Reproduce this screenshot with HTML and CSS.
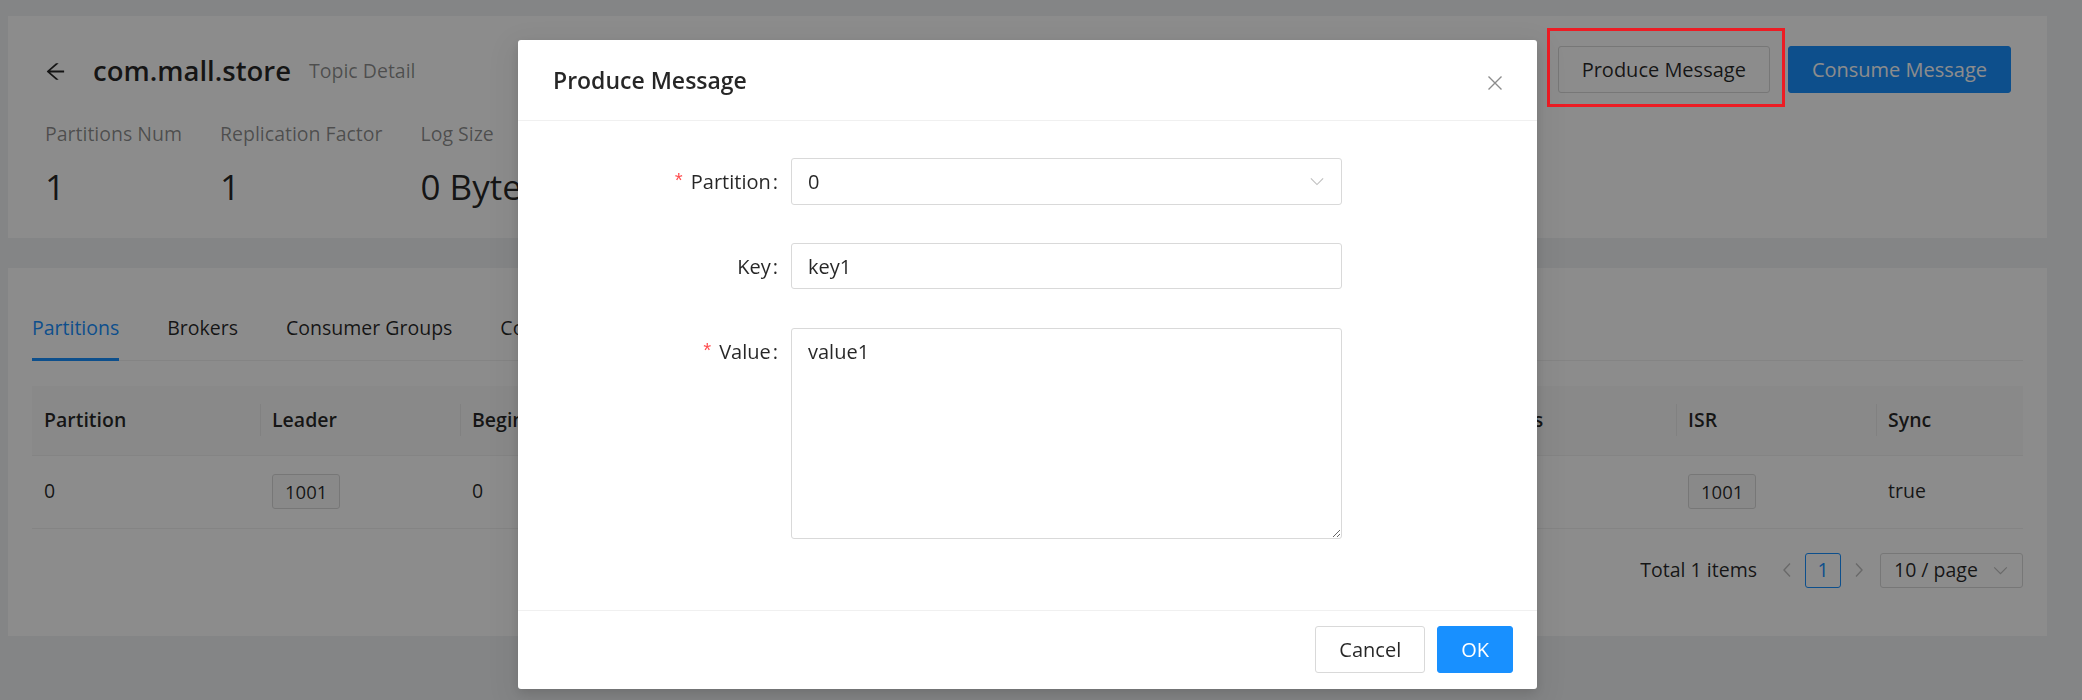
FILE: index.html
```html
<!DOCTYPE html>
<html lang="en">
<head>
<meta charset="utf-8">
<title>Topic Detail</title>
<link rel="stylesheet" href="styles.css">
</head>
<body>
<div class="page">
  <section class="card header-card">
    <div class="head-row">
      <span class="back">
        <svg viewBox="64 64 896 896" fill="currentColor"><path d="M872 474H286.9l350.2-304c5.6-4.9 2.2-14-5.2-14h-88.5c-3.9 0-7.6 1.4-10.5 3.9L155 487.8a31.96 31.960 0 000 48.3L535.1 866c1.5 1.3 3.3 2 5.2 2h91.5c7.4 0 10.8-9.2 5.2-14L286.9 550H872c4.4 0 8-3.6 8-8v-60c0-4.4-3.6-8-8-8z"/></svg>
      </span>
      <h1 class="title">com.mall.store</h1>
      <span class="subtitle">Topic Detail</span>
      <div class="actions">
        <button class="btn">Produce Message</button>
        <button class="btn btn-primary">Consume Message</button>
      </div>
    </div>
    <div class="stats">
      <div class="stat"><div class="stat-label">Partitions Num</div><div class="stat-value">1</div></div>
      <div class="stat"><div class="stat-label">Replication Factor</div><div class="stat-value">1</div></div>
      <div class="stat"><div class="stat-label">Log Size</div><div class="stat-value">0 Byte</div></div>
    </div>
  </section>

  <section class="card tabs-card">
    <div class="tabs">
      <div class="tab active">Partitions</div>
      <div class="tab">Brokers</div>
      <div class="tab">Consumer Groups</div>
      <div class="tab">Configs</div>
    </div>
    <table class="table">
      <colgroup>
        <col class="c-partition"><col class="c-leader"><col class="c-begin"><col class="c-end"><col class="c-replicas"><col class="c-isr"><col class="c-sync">
      </colgroup>
      <thead>
        <tr><th>Partition</th><th>Leader</th><th>Beginning Offset</th><th>End Offset</th><th>Replicas</th><th>ISR</th><th>Sync</th></tr>
      </thead>
      <tbody>
        <tr><td>0</td><td><span class="tag">1001</span></td><td>0</td><td>0</td><td><span class="tag">1001</span></td><td><span class="tag">1001</span></td><td>true</td></tr>
      </tbody>
    </table>
    <div class="pagination">
      <span class="total">Total 1 items</span>
      <span class="pg-arrow"><svg viewBox="0 0 10 16"><polyline points="8,1.5 2,8 8,14.5" fill="none" stroke="currentColor" stroke-width="1.4"/></svg></span>
      <span class="pg-item">1</span>
      <span class="pg-arrow"><svg viewBox="0 0 10 16"><polyline points="2,1.5 8,8 2,14.5" fill="none" stroke="currentColor" stroke-width="1.4"/></svg></span>
      <span class="pg-size">10 / page<svg class="chev" viewBox="0 0 16 10"><polyline points="1,1.5 8,8.5 15,1.5" fill="none" stroke="currentColor" stroke-width="1.3"/></svg></span>
    </div>
  </section>
</div>

<div class="mask"></div>
<div class="annot"></div>

<div class="modal" role="dialog">
  <div class="modal-header">
    <div class="modal-title">Produce Message</div>
  </div>
  <span class="modal-close">
    <svg viewBox="0 0 16 16"><path d="M1.5 1.5L14.5 14.5M14.5 1.5L1.5 14.5" stroke="currentColor" stroke-width="1.4" fill="none"/></svg>
  </span>
  <div class="modal-body">
    <div class="form-item">
      <label class="form-label"><span class="req">*</span>Partition<span class="colon">:</span></label>
      <div class="form-control">
        <div class="select"><span>0</span><svg class="chev" viewBox="0 0 16 10"><polyline points="1,1.5 8,8.5 15,1.5" fill="none" stroke="currentColor" stroke-width="1.3"/></svg></div>
      </div>
    </div>
    <div class="form-item">
      <label class="form-label">Key<span class="colon">:</span></label>
      <div class="form-control">
        <input class="input" type="text" value="key1">
      </div>
    </div>
    <div class="form-item">
      <label class="form-label"><span class="req">*</span>Value<span class="colon">:</span></label>
      <div class="form-control">
        <textarea class="textarea">value1</textarea>
      </div>
    </div>
  </div>
  <div class="modal-footer">
    <button class="btn">Cancel</button>
    <button class="btn btn-primary">OK</button>
  </div>
</div>
</body>
</html>
```

FILE: styles.css
```css
* { box-sizing: border-box; margin: 0; padding: 0; }
html, body { height: 100%; }
body {
  background: #f0f2f5;
  font-family: "Open Sans", "Noto Sans", sans-serif;
  font-size: 19.5px;
  line-height: 1.5715;
  color: rgba(0, 0, 0, .85);
  overflow: hidden;
}
.page {
  padding: 16px 35px 0 8px;
  display: flex;
  flex-direction: column;
  gap: 30px;
}
.card { background: #fff; }

/* header card */
.header-card { height: 222px; padding: 30px 36px 0 37px; }
.head-row { display: flex; align-items: center; height: 47px; }
.back { display: flex; width: 21px; height: 21px; margin-right: 27px; margin-top: 3px; color: rgba(0,0,0,.85); }
.back svg { width: 21px; height: 21px; }
.title { font-size: 27.5px; font-weight: 600; line-height: 38px; margin-right: 18px; margin-top: 3px; }
.subtitle { color: rgba(0, 0, 0, .45); margin-top: 3px; }
.actions { margin-left: auto; display: flex; gap: 18px; }
.btn {
  height: 47px;
  padding: 0 23px;
  border: 1px solid #d9d9d9;
  border-radius: 3px;
  background: #fff;
  font-family: inherit;
  font-size: 20px;
  color: rgba(0, 0, 0, .85);
  line-height: 1;
}
.btn-primary { background: #1890ff; border-color: #1890ff; color: #fff; }
.stats { display: flex; gap: 38px; margin-top: 27px; }
.stat-label { color: rgba(0, 0, 0, .45); line-height: 28px; }
.stat-value { font-size: 35px; line-height: 54px; margin-top: 12px; }

/* tabs card */
.tabs-card { height: 368px; padding: 27px 24px 0; }
.tabs { display: flex; gap: 48px; border-bottom: 1px solid #f0f0f0; margin-bottom: 25px; }
.tab { position: relative; padding: 17px 0; line-height: 31px; }
.tab.active { color: #1890ff; }
.tab.active::after {
  content: "";
  position: absolute;
  left: 0; right: 0; bottom: -1px;
  height: 3px;
  background: #1890ff;
}

.table { width: 100%; border-collapse: collapse; table-layout: fixed; }
.c-partition { width: 228px; }
.c-leader { width: 200px; }
.c-begin { width: 497px; }
.c-end { width: 497px; }
.c-replicas { width: 222px; }
.c-isr { width: 200px; }
.c-sync { width: 147px; }
.table th {
  position: relative;
  height: 69px;
  padding: 0 12px;
  background: #fafafa;
  font-weight: 600;
  text-align: left;
  border-bottom: 1px solid #f0f0f0;
  white-space: nowrap;
}
.table th + th::before {
  content: "";
  position: absolute;
  left: 0; top: 18px;
  width: 1px; height: 32px;
  background: rgba(0, 0, 0, .06);
}
.table td { height: 73px; padding: 0 12px; border-bottom: 1px solid #f0f0f0; }
.tag {
  display: inline-block;
  height: 35px;
  line-height: 33px;
  padding: 0 12px;
  border: 1px solid #d9d9d9;
  border-radius: 3px;
  background: #fafafa;
  font-size: 18.5px;
}

.pagination { display: flex; justify-content: flex-end; align-items: center; margin-top: 24px; height: 35px; }
.total { margin-right: 13px; }
.pg-arrow { width: 34px; height: 35px; display: flex; align-items: center; justify-content: center; color: rgba(0,0,0,.25); }
.pg-arrow svg { width: 10px; height: 16px; }
.pg-item {
  width: 36px; height: 35px;
  margin: 0 1px;
  display: flex; align-items: center; justify-content: center;
  border: 1px solid #1890ff; border-radius: 3px;
  color: #1890ff; font-weight: 500;
}
.pg-size {
  width: 143px; height: 35px;
  margin-left: 4px;
  padding: 0 14px 0 13px;
  display: flex; align-items: center; justify-content: space-between;
  border: 1px solid #d9d9d9; border-radius: 3px;
}
.chev { width: 15px; height: 9px; color: rgba(0,0,0,.25); }

/* overlay */
.mask { position: fixed; inset: 0; background: rgba(0, 0, 0, .45); z-index: 10; }
.annot {
  position: absolute;
  left: 1547px; top: 28px;
  width: 238px; height: 79px;
  border: 3px solid #ed1c24;
  z-index: 11;
}

.modal {
  position: absolute;
  left: 518px; top: 40px;
  width: 1019px; height: 649px;
  background: #fff;
  border-radius: 3px;
  box-shadow: 0 4px 12px rgba(0,0,0,.12), 0 9px 28px 8px rgba(0,0,0,.05);
  display: flex;
  flex-direction: column;
  font-size: 20px;
  z-index: 12;
}
.modal-header { height: 81px; padding: 25px 35px 0; border-bottom: 1px solid #f0f0f0; }
.modal-title { font-size: 23px; font-weight: 600; line-height: 31px; }
.modal-close {
  position: absolute; top: 1px; right: 0;
  width: 84px; height: 84px;
  display: flex; align-items: center; justify-content: center;
  color: rgba(0, 0, 0, .45);
}
.modal-close svg { width: 16px; height: 16px; }
.modal-body { flex: 1; padding: 37px 34px 0; }
.form-item { display: flex; margin-bottom: 38px; }
.form-label {
  width: 239px;
  display: flex; justify-content: flex-end; align-items: center;
  height: 47px;
  padding-right: 13px;
}
.req { color: #ff4d4f; font-family: "Liberation Mono", monospace; font-size: 20px; margin-right: 6px; line-height: 1; margin-top: 3px; }
.colon { margin-left: 2px; }
.form-control { width: 551px; }
.select {
  height: 47px;
  padding: 0 17px 0 16px;
  display: flex; align-items: center; justify-content: space-between;
  border: 1px solid #d9d9d9; border-radius: 3px;
}
.select .chev { width: 14px; height: 9px; }
.input, .textarea {
  display: block;
  width: 100%;
  border: 1px solid #d9d9d9; border-radius: 3px;
  font-family: inherit; font-size: 20px;
  color: rgba(0, 0, 0, .85);
  padding: 0 16px;
  outline: none;
  background: #fff;
}
.input { height: 46px; }
.textarea { height: 211px; padding: 9px 16px; line-height: 28px; resize: vertical; }
.modal-footer {
  height: 79px;
  padding: 15px 24px 0;
  border-top: 1px solid #f0f0f0;
  display: flex; justify-content: flex-end; gap: 12px;
}
```
